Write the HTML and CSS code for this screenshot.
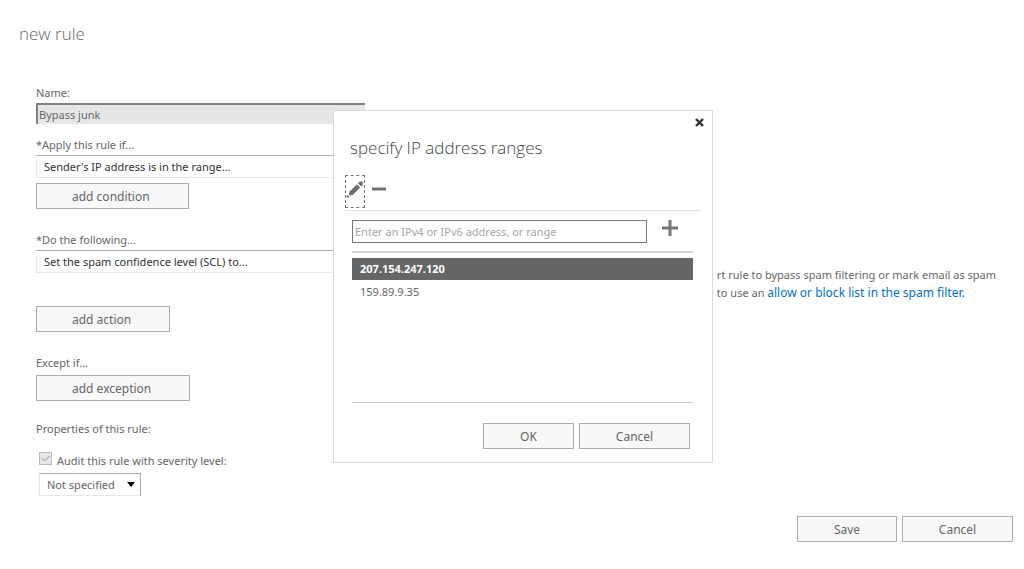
FILE: index.html
```
<!DOCTYPE html>
<html lang="en">
<head>
  <meta charset="UTF-8">
  <meta name="viewport" content="width=device-width, initial-scale=1.0">
  <title>new rule</title>
  <link rel="stylesheet" href="styles.css">
</head>
<body>

  <form class="page">
    <h1>new rule</h1>

    <div class="fields">
      <div class="group name-group">
        <label for="name">Name:</label>
        <input class="name" type="text" id="name" value="Bypass junk" disabled>
      </div>

      <div class="group condition-group">
        <label for="condition">*Apply this rule if...</label>
        <select class="wide" id="condition">
          <option>Sender's IP address is in the range...</option>
        </select>
        <button class="btn add condition" type="button">add condition</button>
      </div>

      <div class="action-row">
        <div class="group">
          <label for="action">*Do the following...</label>
          <select class="wide" id="action">
            <option>Set the spam confidence level (SCL) to...</option>
          </select>
          <button class="btn add action" type="button">add action</button>
        </div>
        <p class="tip">rt rule to bypass spam filtering or mark email as spam<br>to use an <a href="#">allow or block list in the spam filter.</a></p>
      </div>

      <div class="group except-group">
        <span class="label">Except if...</span>
        <button class="btn add except" type="button">add exception</button>
      </div>

      <div class="group">
        <span class="label">Properties of this rule:</span>
        <div class="audit">
          <input type="checkbox" id="audit" checked disabled>
          <label for="audit">Audit this rule with severity level:</label>
        </div>
        <select class="severity" aria-label="Severity level">
          <option>Not specified</option>
        </select>
      </div>
    </div>

    <div class="footer">
      <button class="btn save" type="button">Save</button>
      <button class="btn cancel" type="button">Cancel</button>
    </div>
  </form>

  <div class="dialog" role="dialog" aria-labelledby="dialogTitle">
    <button class="close" type="button" aria-label="Close">
      <svg width="9" height="9" viewBox="0 0 9 9"><path d="M1 1L8 8M8 1L1 8" stroke="#333" stroke-width="2.4"/></svg>
    </button>
    <h2 id="dialogTitle">specify IP address ranges</h2>

    <div class="toolbar">
      <button class="tool edit" type="button" aria-label="Edit">
        <svg width="18" height="18" viewBox="0 0 18 18" fill="#707070">
          <circle cx="1.8" cy="16.4" r="1.2"/>
          <path d="M2.8 14.4L3.4 11.8L11 4.2L14.2 7.4L6.6 15L4.2 15.6Z"/>
          <path d="M12 3.2L13.2 2Q14.8 .6 16.5 2Q17.8 3.6 16.4 5.2L15.2 6.4Z"/>
        </svg>
      </button>
      <button class="tool" type="button" aria-label="Remove">
        <svg width="14" height="14" viewBox="0 0 14 14"><path d="M0 7H14" stroke="#707070" stroke-width="3"/></svg>
      </button>
    </div>

    <div class="entry">
      <input type="text" placeholder="Enter an IPv4 or IPv6 address, or range" aria-label="IP address">
      <button class="tool" type="button" aria-label="Add">
        <svg width="16" height="16" viewBox="0 0 16 16"><path d="M0 8H16M8 0V16" stroke="#777" stroke-width="3"/></svg>
      </button>
    </div>

    <ul class="list" role="listbox" aria-label="IP addresses">
      <li class="selected" role="option" aria-selected="true">207.154.247.120</li>
      <li role="option" aria-selected="false">159.89.9.35</li>
    </ul>

    <div class="dialog-buttons">
      <button class="btn ok" type="button">OK</button>
      <button class="btn cancel" type="button">Cancel</button>
    </div>
  </div>

</body>
</html>
```
FILE: styles.css
```
* {
  box-sizing: border-box;
}

body {
  margin: 0;
  background: #fff;
  color: #666;
  font-family: 'Segoe UI', 'Noto Sans', sans-serif;
  font-size: 11px;
  line-height: 18px;
}

input, select, button {
  font-family: inherit;
  font-size: inherit;
  color: inherit;
  margin: 0;
  border-radius: 0;
}

h1, h2 {
  margin: 0;
  font-family: 'Segoe UI', 'Open Sans', sans-serif;
  font-size: 17px;
  line-height: 24px;
  font-weight: 300;
}

.page {
  min-height: 100vh;
  padding: 22px 11px 27px 19px;
  display: flex;
  flex-direction: column;
}

.fields {
  padding: 38px 17px 0 17px;
}

.group {
  display: flex;
  flex-direction: column;
  align-items: flex-start;
}

.name-group {
  margin-bottom: 12px;
}

.name {
  width: 329px;
  height: 21px;
  margin-top: 1px;
  padding: 0 1px;
  background: #e6e6e6;
  border: 0 solid #808080;
  border-top-width: 2px;
  border-left-width: 2px;
}

select {
  appearance: none;
  height: 23px;
  padding: 0 7px;
  background: #fff;
  border: 1px solid #e3e9ef;
  border-top-color: #a5abad;
}

.wide {
  width: 329px;
  margin-top: 1px;
  color: #333;
}

.btn {
  height: 26px;
  padding: 0;
  background: #f8f8f8;
  border: 1px solid #a5afb1;
  font-size: 12px;
}

.add {
  padding: 0 35px;
  text-align: left;
}

.condition {
  width: 153px;
  margin-top: 5px;
}

.condition-group {
  margin-bottom: 22px;
}

.action-row {
  display: flex;
  justify-content: space-between;
  margin-bottom: 22px;
}

.action {
  width: 134px;
  margin-top: 33px;
}

.tip {
  margin: 35px 0 0;
  white-space: nowrap;
}

.tip a {
  color: #0072c6;
  font-size: 12px;
  text-decoration: none;
}

.except {
  width: 154px;
  margin-top: 3px;
}

.except-group {
  margin-bottom: 19px;
}

.audit {
  display: flex;
  gap: 5px;
  margin: 14px 0 3px 3px;
}

.audit input {
  appearance: none;
  width: 13px;
  height: 13px;
  background: #e6e6e6 url("data:image/svg+xml,%3Csvg xmlns='http://www.w3.org/2000/svg' viewBox='0 0 11 11'%3E%3Cpath d='M2 5.5L4.5 8L9.5 3' fill='none' stroke='%23888'/%3E%3C/svg%3E");
  border: 1px solid #bbb;
}

.severity {
  width: 102px;
  margin-left: 3px;
  border-right-color: #a5abad;
  background: #fff url("data:image/svg+xml,%3Csvg xmlns='http://www.w3.org/2000/svg' width='8' height='5'%3E%3Cpath d='M0 0H8L4 5Z'/%3E%3C/svg%3E") no-repeat right 5px center;
}

.footer {
  display: flex;
  justify-content: flex-end;
  gap: 5px;
  margin-top: auto;
}

.save {
  width: 100px;
}

.cancel {
  width: 111px;
}

.dialog {
  position: absolute;
  left: 333px;
  top: 110px;
  width: 380px;
  padding: 25px 11px 13px;
  background: #fff;
  border: 1px solid #d5dcdd;
}

.dialog h2 {
  padding-left: 5px;
  color: #444;
}

.close {
  position: absolute;
  top: 7px;
  right: 8px;
  padding: 0;
  border: 0;
  background: none;
  line-height: 9px;
}

.close svg, .tool svg {
  display: block;
}

.toolbar {
  display: flex;
  gap: 7px;
  padding: 15px 0 2px;
  border-bottom: 1px solid #dde3e6;
}

.tool {
  padding: 0;
  border: 0;
  background: none;
}

.edit {
  width: 20px;
  height: 33px;
  padding: 0 0 6px;
  border: 1px dashed #777;
}

.toolbar .tool + .tool {
  padding-bottom: 6px;
}

.entry {
  display: flex;
  align-items: flex-start;
  gap: 15px;
  margin: 9px 8px 0 7px;
  padding-bottom: 8px;
  border-bottom: 2px solid #d0d6da;
}

.entry input {
  width: 295px;
  height: 23px;
  padding: 0 2px;
  border: 1px solid #777;
}

.entry input::placeholder {
  color: #a6a6a6;
}

.list {
  min-height: 150px;
  margin: 0 8px 0 7px;
  padding: 5px 0 0;
  border-bottom: 1px solid #c5cdd2;
  list-style: none;
}

.list li {
  padding: 2px 8px;
  line-height: 20px;
}

.list .selected {
  padding: 1px 8px;
  background: #666;
  color: #fff;
  font-weight: bold;
}

.dialog-buttons {
  display: flex;
  justify-content: flex-end;
  gap: 5px;
  padding: 20px 11px 0 0;
}

.ok {
  width: 91px;
}
```
